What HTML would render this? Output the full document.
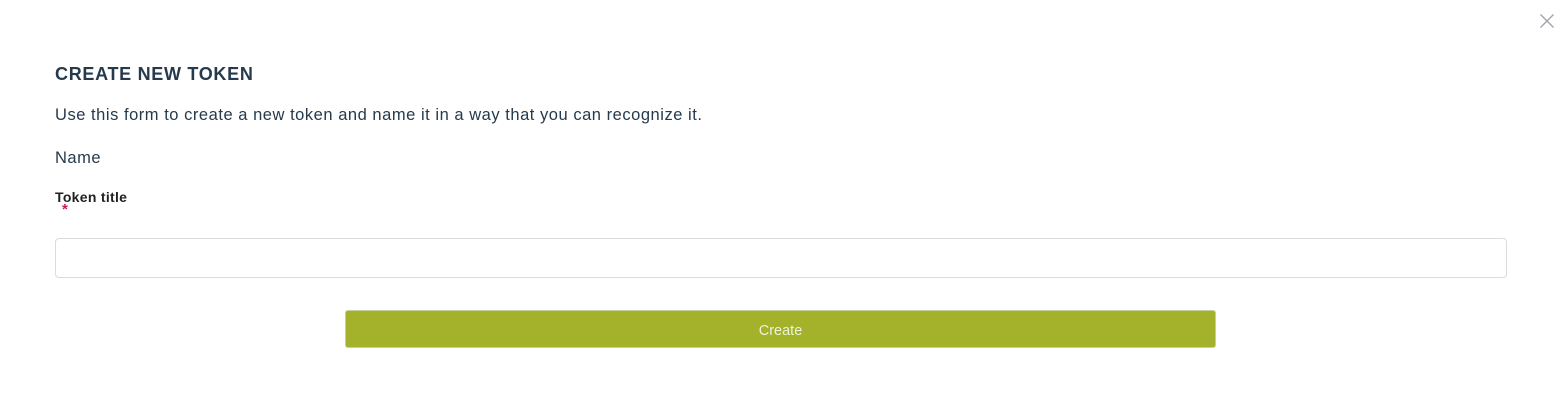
<!DOCTYPE html>
<html><head><style>
body{margin:0;width:1566px;height:406px;background:#fff;font-family:"Liberation Sans",sans-serif;position:relative;overflow:hidden}
.a{position:absolute;white-space:nowrap}
</style></head><body>
<svg class="a" style="left:1539px;top:13px" width="16" height="16"><path d="M1.5 1.5L14.5 14.5M14.5 1.5L1.5 14.5" stroke="#a0a4ab" stroke-width="1.4"/></svg>
<div class="a" style="left:55px;top:64px;font-size:18px;font-weight:bold;color:#263a4c;letter-spacing:0.7px">CREATE NEW TOKEN</div>
<div class="a" style="left:55px;top:106px;font-size:16.5px;color:#263a4c;letter-spacing:0.53px">Use this form to create a new token and name it in a way that you can recognize it.</div>
<div class="a" style="left:55px;top:149px;font-size:16.5px;color:#263a4c;letter-spacing:0.5px">Name</div>
<div class="a" style="left:55px;top:189px;font-size:14px;font-weight:bold;color:#222;letter-spacing:0.3px">Token title</div>
<div class="a" style="left:62px;top:201px;font-size:15px;font-weight:bold;color:#d0174d">*</div>
<div class="a" style="left:55px;top:238px;width:1450px;height:38px;border:1px solid #d9dbde;border-radius:4px"></div>
<div class="a" style="left:345px;top:310px;width:869px;height:36px;border:1px solid #c9cf9a;border-radius:3px;background:#a3b22a;color:#eef2d6;font-size:14.5px;text-align:center;line-height:40px">Create</div>
</body></html>
